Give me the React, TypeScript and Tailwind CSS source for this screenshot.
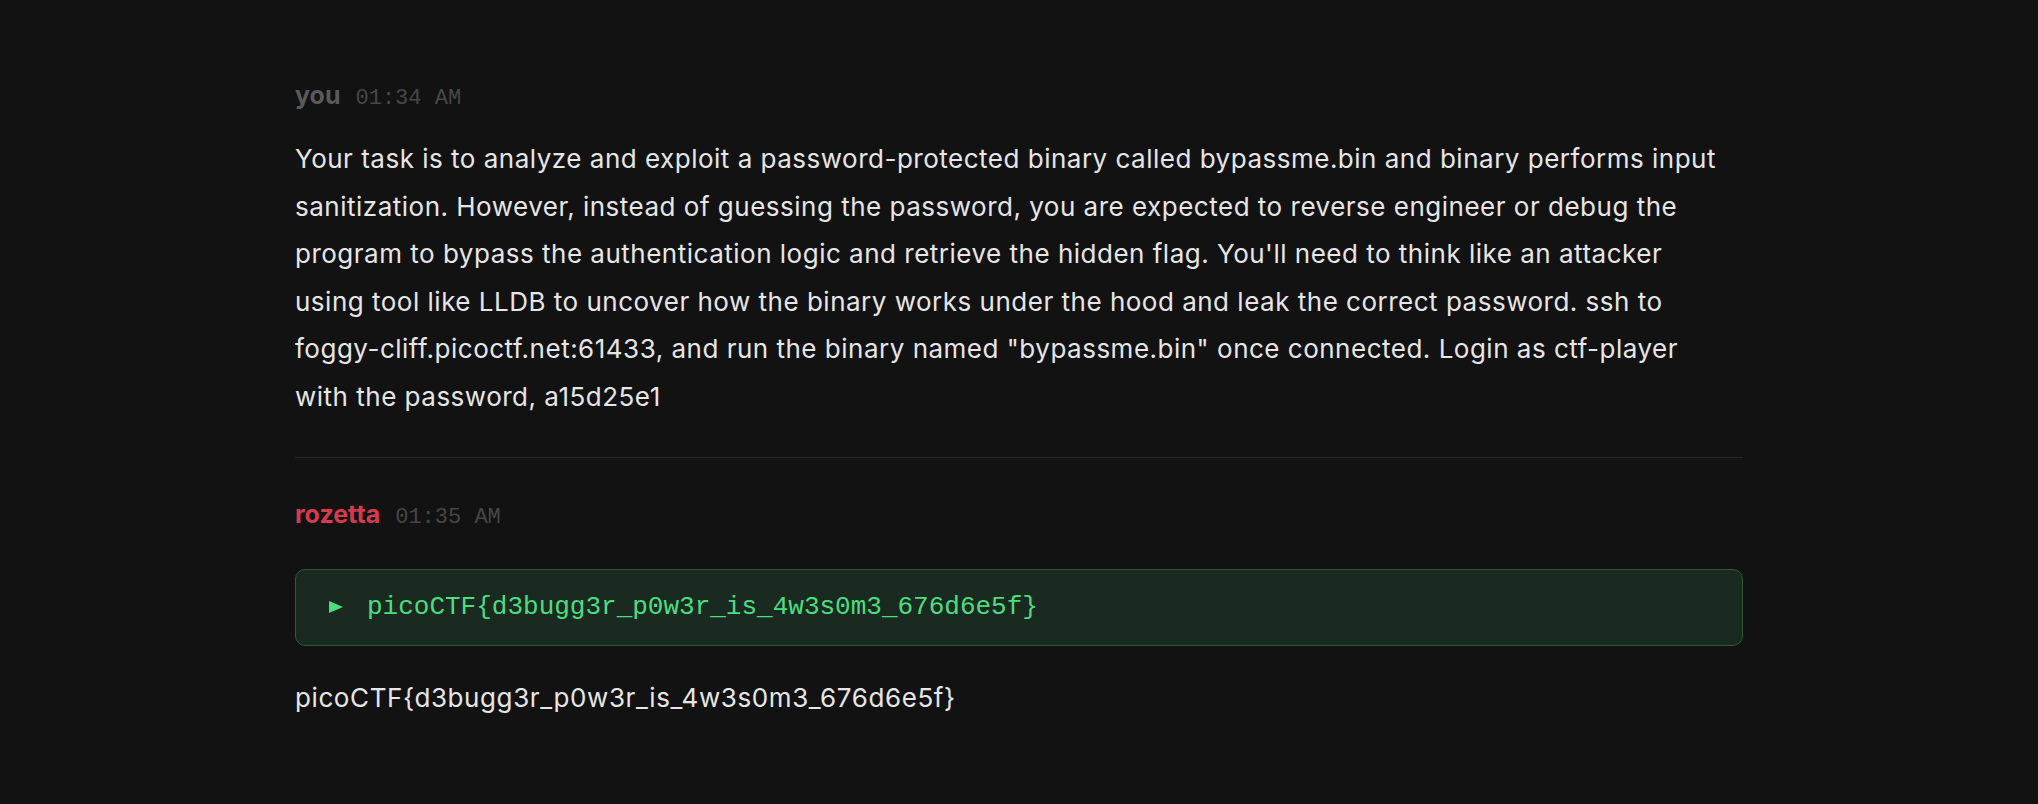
import React from "react";

export default function App() {
  const sans = "font-['Inter','Noto_Sans',sans-serif]";
  const mono = "font-['Liberation_Mono','DejaVu_Sans_Mono',monospace]";
  return (
    <div className={`min-h-[804px] w-full bg-[#121212] pt-10 ${sans}`}>
      <div className="mx-auto w-[1448px]">
        <div className="border-b border-[#262626] pt-[39px] pb-[36px]">
          <div className="flex items-baseline leading-[33px]">
            <span className="text-[25px] font-bold text-[#5a5a5a]">you</span>
            <span className={`ml-[15px] text-[22px] text-[#474747] ${mono}`}>01:34 AM</span>
          </div>
          <p className="mt-5 text-[26px] leading-[47.6px] tracking-[0.5px] text-[#e6e6e6]">
            Your task is to analyze and exploit a password-protected binary called bypassme.bin and binary performs input
            <br />
            sanitization. However, instead of guessing the password, you are expected to reverse engineer or debug the
            <br />
            program to bypass the authentication logic and retrieve the hidden flag. You'll need to think like an attacker
            <br />
            using tool like LLDB to uncover how the binary works under the hood and leak the correct password. ssh to
            <br />
            foggy-cliff.picoctf.net:61433, and run the binary named "bypassme.bin" once connected. Login as ctf-player
            <br />
            with the password, a15d25e1
          </p>
        </div>
        <div className="pt-10">
          <div className="flex items-baseline leading-[33px]">
            <span className="text-[25px] font-bold text-[#d63a4c]">rozetta</span>
            <span className={`ml-[15px] text-[22px] text-[#474747] ${mono}`}>01:35 AM</span>
          </div>
          <div className="mt-[35px] flex items-center rounded-[10px] border border-[#2a5a38] bg-[#1b2a20] py-[18px] pl-[33px]">
            <svg width="14" height="12" viewBox="0 0 14 12" className="shrink-0">
              <polygon points="0,0 14,6 0,12" fill="#4ade80" />
            </svg>
            <span className={`ml-6 text-[26px] leading-[39px] text-[#4ade80] ${mono}`}>
              picoCTF{"{"}d3bugg3r_p0w3r_is_4w3s0m3_676d6e5f{"}"}
            </span>
          </div>
          <p className="mt-[28px] text-[26px] leading-[47.6px] tracking-[0.6px] text-[#e6e6e6]">
            picoCTF{"{"}d3bugg3r_p0w3r_is_4w3s0m3_676d6e5f{"}"}
          </p>
        </div>
      </div>
    </div>
  );
}
